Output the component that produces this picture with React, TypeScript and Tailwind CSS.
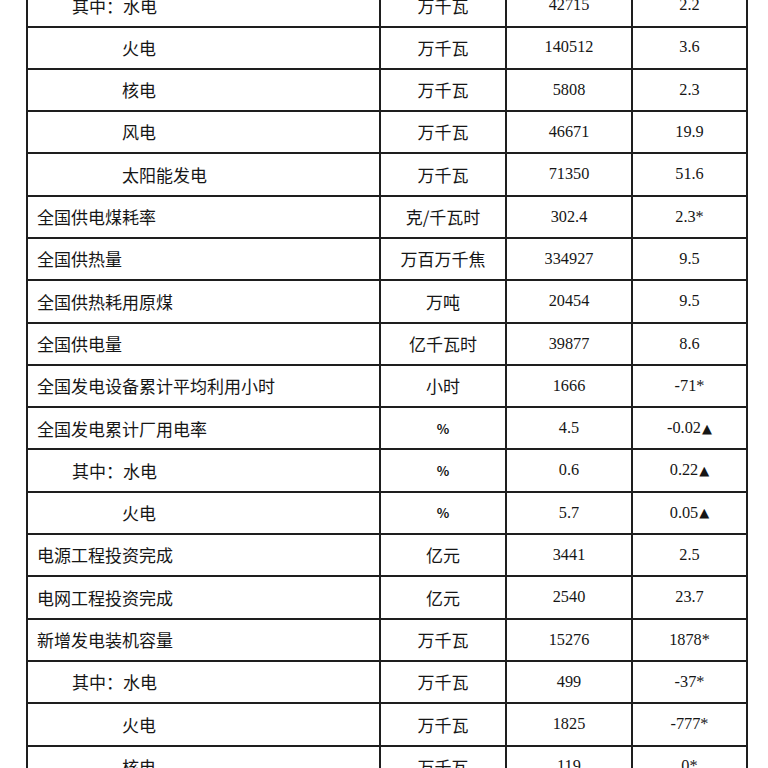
import React from "react";

type Row = { label: string; indent: 0 | 1 | 2; unit: string; value: string; change: string };

const rows: Row[] = [
  { label: "其中：水电", indent: 1, unit: "万千瓦", value: "42715", change: "2.2" },
  { label: "火电", indent: 2, unit: "万千瓦", value: "140512", change: "3.6" },
  { label: "核电", indent: 2, unit: "万千瓦", value: "5808", change: "2.3" },
  { label: "风电", indent: 2, unit: "万千瓦", value: "46671", change: "19.9" },
  { label: "太阳能发电", indent: 2, unit: "万千瓦", value: "71350", change: "51.6" },
  { label: "全国供电煤耗率", indent: 0, unit: "克/千瓦时", value: "302.4", change: "2.3*" },
  { label: "全国供热量", indent: 0, unit: "万百万千焦", value: "334927", change: "9.5" },
  { label: "全国供热耗用原煤", indent: 0, unit: "万吨", value: "20454", change: "9.5" },
  { label: "全国供电量", indent: 0, unit: "亿千瓦时", value: "39877", change: "8.6" },
  { label: "全国发电设备累计平均利用小时", indent: 0, unit: "小时", value: "1666", change: "-71*" },
  { label: "全国发电累计厂用电率", indent: 0, unit: "%", value: "4.5", change: "-0.02▲" },
  { label: "其中：水电", indent: 1, unit: "%", value: "0.6", change: "0.22▲" },
  { label: "火电", indent: 2, unit: "%", value: "5.7", change: "0.05▲" },
  { label: "电源工程投资完成", indent: 0, unit: "亿元", value: "3441", change: "2.5" },
  { label: "电网工程投资完成", indent: 0, unit: "亿元", value: "2540", change: "23.7" },
  { label: "新增发电装机容量", indent: 0, unit: "万千瓦", value: "15276", change: "1878*" },
  { label: "其中：水电", indent: 1, unit: "万千瓦", value: "499", change: "-37*" },
  { label: "火电", indent: 2, unit: "万千瓦", value: "1825", change: "-777*" },
  { label: "核电", indent: 2, unit: "万千瓦", value: "119", change: "0*" },
];

const cjk = "font-['Noto_Sans_CJK_SC','Noto_Sans',sans-serif]";
const serif = "font-['Liberation_Serif','Noto_Sans_CJK_SC',serif]";

function Change({ text }: { text: string }) {
  if (text.endsWith("▲")) {
    return (
      <span className="flex items-center">
        <span>{text.slice(0, -1)}</span>
        <span className="text-[13px] font-['DejaVu_Sans',sans-serif] ml-[1px]">▲</span>
      </span>
    );
  }
  return <span>{text}</span>;
}

export default function App() {
  return (
    <div className="w-[768px] h-[768px] overflow-hidden bg-white text-[#161616]">
      <div className="-mt-[16.8px] ml-[26px] w-[722px]">
        {rows.map((r, i) => (
          <div
            key={i}
            className="grid grid-cols-[353px_126px_126px_117px] h-[42.3px] border-t-2 border-[#1e1e1e]"
          >
            <div
              className={`border-l-2 border-[#1e1e1e] flex items-center text-[17px] ${cjk} ${
                r.indent === 0 ? "pl-[9px]" : r.indent === 1 ? "pl-[44px]" : "pl-[94px]"
              }`}
            >
              {r.label}
            </div>
            <div className={`border-l-2 border-[#1e1e1e] flex items-center justify-center text-[17px] ${cjk}`}>
              {r.unit === "%" ? <span className="text-[13px] font-bold">%</span> : r.unit}
            </div>
            <div className={`border-l-2 border-[#1e1e1e] flex items-center justify-center text-[16.3px] ${serif}`}>
              {r.value}
            </div>
            <div
              className={`border-l-2 border-r-2 border-[#1e1e1e] flex items-center justify-center text-[16.3px] ${serif}`}
            >
              <Change text={r.change} />
            </div>
          </div>
        ))}
      </div>
    </div>
  );
}
